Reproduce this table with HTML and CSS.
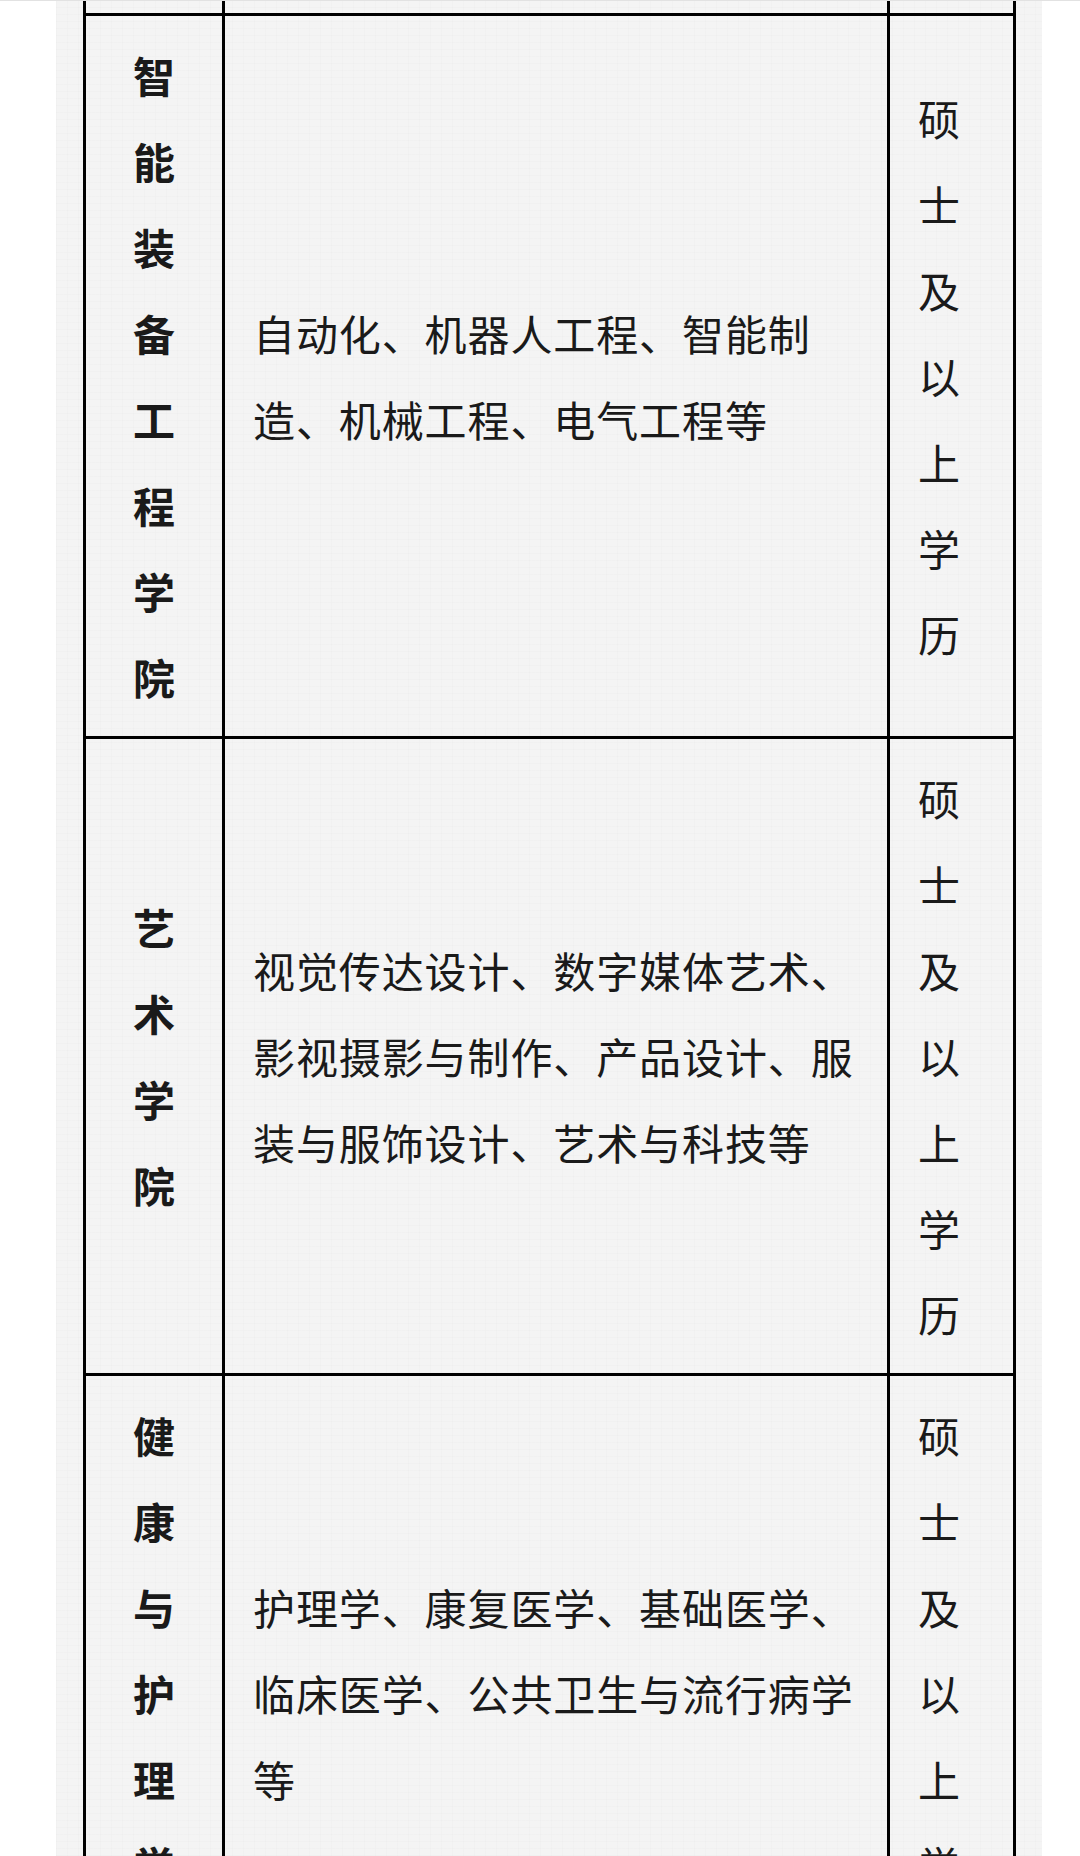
FILE: index.html
```html
<!DOCTYPE html>
<html lang="zh-CN">
<head>
<meta charset="utf-8">
<title>招聘专业要求</title>
<link rel="stylesheet" href="styles.css">
</head>
<body>
<div class="topline"></div>
<main class="paper">
  <table class="req">
    <colgroup>
      <col class="c-college">
      <col class="c-major">
      <col class="c-degree">
    </colgroup>
    <tbody>
      <tr class="stub">
        <td></td><td></td><td></td>
      </tr>
      <tr>
        <td class="college">智能装备工程学院</td>
        <td class="major">自动化、机器人工程、智能制造、机械工程、电气工程等</td>
        <td class="degree">硕士及以上学历</td>
      </tr>
      <tr>
        <td class="college">艺术学院</td>
        <td class="major">视觉传达设计、数字媒体艺术、影视摄影与制作、产品设计、服装与服饰设计、艺术与科技等</td>
        <td class="degree">硕士及以上学历</td>
      </tr>
      <tr>
        <td class="college">健康与护理学院</td>
        <td class="major">护理学、康复医学、基础医学、临床医学、公共卫生与流行病学等</td>
        <td class="degree">硕士及以上学历</td>
      </tr>
    </tbody>
  </table>
</main>
</body>
</html>
```

FILE: styles.css
```css
html, body {
  margin: 0;
  padding: 0;
  background: #ffffff;
}

body {
  width: 1080px;
  height: 1856px;
  overflow: hidden;
  position: relative;
  font-family: "Noto Sans CJK SC", "Noto Sans", sans-serif;
  color: #1a1a1a;
}

.topline {
  height: 1px;
  background: #e2e2e2;
}

.paper {
  margin-left: 56px;
  width: 986px;
  height: 1855px;
  background-color: #f4f4f4;
  background-image:
    repeating-linear-gradient(0deg, rgba(0,0,0,0.012) 0 1px, transparent 1px 7px),
    repeating-linear-gradient(90deg, rgba(0,0,0,0.012) 0 1px, transparent 1px 11px);
  padding-left: 27px;
  box-sizing: border-box;
  overflow: hidden;
}

.req {
  border-collapse: collapse;
  table-layout: fixed;
  width: 930px;
  font-size: 42px;
  line-height: 86px;
}

.c-college { width: 139px; }
.c-major   { width: 665px; }
.c-degree  { width: 126px; }

.req td {
  border: 3px solid #000;
  vertical-align: middle;
  padding: 16px 0;
  word-break: break-all;
}

.stub td {
  height: 12px;
  padding: 0;
  border-top: none;
}

.college {
  font-weight: 700;
  text-align: center;
  padding-left: 47px !important;
  padding-right: 47px !important;
}

.major {
  padding-left: 28px !important;
  padding-right: 24px !important;
  letter-spacing: 0.9px;
}

.degree {
  padding-left: 28px !important;
  padding-right: 50px !important;
}
```
